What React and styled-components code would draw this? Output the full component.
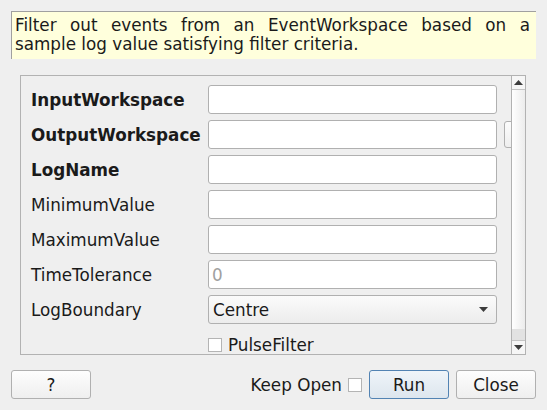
import React from "react";
import styled, { createGlobalStyle } from "styled-components";

const Global = createGlobalStyle`
  html, body { margin: 0; padding: 0; background: #efefef; }
  body { font-family: "DejaVu Sans", "Liberation Sans", sans-serif; font-size: 16.8px; color: #1a1a1a; }
  * { box-sizing: border-box; }
`;

const Window = styled.div`
  width: 547px;
  height: 410px;
  padding: 11px 11px 0 11px;
  display: flex;
  flex-direction: column;
  background: #efefef;
`;

const Description = styled.div`
  height: 48px;
  background: #ffffdc;
  border-top: 1px solid #a0a0a0;
  border-left: 1px solid #a0a0a0;
  padding: 4px 6px 0 3px;
  line-height: 19px;
  text-align: justify;
  color: #1a1a1a;
`;

const ScrollFrame = styled.div`
  margin: 16px 10px 0 9px;
  height: 280px;
  border: 1px solid #b2b2b2;
  display: flex;
  background: #efefef;
`;

const Viewport = styled.div`
  flex: 1;
  overflow: hidden;
  padding: 9px 0 0 10px;
`;

const Grid = styled.div`
  display: grid;
  grid-template-columns: 170px 289px 40px;
  grid-auto-rows: 29px;
  column-gap: 7px;
  row-gap: 6px;
  align-items: center;
  width: 520px;
`;

const Label = styled.div`
  font-weight: ${(p) => (p.$bold ? "bold" : "normal")};
  white-space: nowrap;
  color: #1a1a1a;
`;

const TextInput = styled.div`
  height: 29px;
  border: 1px solid #b0b0b0;
  border-radius: 3px;
  background: #fff;
  padding: 0 3px;
  display: flex;
  align-items: center;
  color: ${(p) => (p.$placeholder ? "#a0a0a0" : "#1a1a1a")};
`;

const Combo = styled.div`
  height: 29px;
  border: 1px solid #b0b0b0;
  border-radius: 3px;
  background: linear-gradient(#fbfbfb, #ececec);
  padding: 0 8px 0 4px;
  display: flex;
  align-items: center;
  justify-content: space-between;
`;

const BrowseButton = styled.div`
  height: 27px;
  border: 1px solid #b0b0b0;
  border-radius: 3px;
  background: linear-gradient(#fcfcfc, #eeeeee);
`;

const CheckRow = styled.div`
  display: flex;
  align-items: center;
  gap: 6px;
  white-space: nowrap;
`;

const Box = styled.div`
  width: 14px;
  height: 14px;
  border: 1px solid #b4b4b4;
  background: #fff;
  flex: none;
`;

const ScrollBar = styled.div`
  width: 14px;
  border-left: 1px solid #b2b2b2;
  display: flex;
  flex-direction: column;
  background: #e2e2e2;
`;

const ArrowBtn = styled.div`
  height: 14px;
  flex: none;
  display: flex;
  align-items: center;
  justify-content: center;
  background: #f6f6f6;
  border-${(p) => (p.$up ? "bottom" : "top")}: 1px solid #c4c4c4;
`;

const Handle = styled.div`
  flex: 1;
  margin-bottom: 11px;
  background: linear-gradient(to right, #ffffff, #ececec);
`;

const Footer = styled.div`
  margin-top: 15px;
  display: flex;
  align-items: center;
`;

const Button = styled.div`
  width: ${(p) => p.$w || 80}px;
  height: 29px;
  border: 1px solid ${(p) => (p.$primary ? "#5283b3" : "#b0b0b0")};
  border-radius: 3px;
  background: ${(p) =>
    p.$primary ? "linear-gradient(#eff4f9, #dde6ee)" : "linear-gradient(#fdfdfd, #efefef)"};
  display: flex;
  align-items: center;
  justify-content: center;
  color: #1a1a1a;
  margin-left: ${(p) => p.$ml || 0}px;
`;

const Spacer = styled.div`
  flex: 1;
`;

const KeepOpen = styled.div`
  display: flex;
  align-items: center;
  gap: 6px;
  margin-right: 7px;
  white-space: nowrap;
`;

const Tri = ({ down }) => (
  <svg width="9" height="5" viewBox="0 0 9 5">
    <path d={down ? "M0 0 H9 L4.5 5 Z" : "M0 5 H9 L4.5 0 Z"} fill="#3c3c3c" />
  </svg>
);

const rows = [
  { label: "InputWorkspace", bold: true },
  { label: "OutputWorkspace", bold: true, browse: true },
  { label: "LogName", bold: true },
  { label: "MinimumValue" },
  { label: "MaximumValue" },
  { label: "TimeTolerance", placeholder: "0" },
];

export default function App() {
  return (
    <>
      <Global />
      <Window>
        <Description>
          Filter out events from an EventWorkspace based on a sample log value satisfying filter criteria.
        </Description>
        <ScrollFrame>
          <Viewport>
            <Grid>
              {rows.map((r) => (
                <React.Fragment key={r.label}>
                  <Label $bold={r.bold}>{r.label}</Label>
                  <TextInput $placeholder={!!r.placeholder}>{r.placeholder || ""}</TextInput>
                  {r.browse ? <BrowseButton /> : <div />}
                </React.Fragment>
              ))}
              <Label>LogBoundary</Label>
              <Combo>
                <span>Centre</span>
                <Tri down />
              </Combo>
              <div />
              <div />
              <CheckRow>
                <Box />
                <span>PulseFilter</span>
              </CheckRow>
              <div />
            </Grid>
          </Viewport>
          <ScrollBar>
            <ArrowBtn $up>
              <Tri />
            </ArrowBtn>
            <Handle />
            <ArrowBtn>
              <Tri down />
            </ArrowBtn>
          </ScrollBar>
        </ScrollFrame>
        <Footer>
          <Button $w={80}>?</Button>
          <Spacer />
          <KeepOpen>
            <span>Keep Open</span>
            <Box />
          </KeepOpen>
          <Button $w={80} $primary>Run</Button>
          <Button $w={80} $ml={7}>Close</Button>
        </Footer>
      </Window>
    </>
  );
}
